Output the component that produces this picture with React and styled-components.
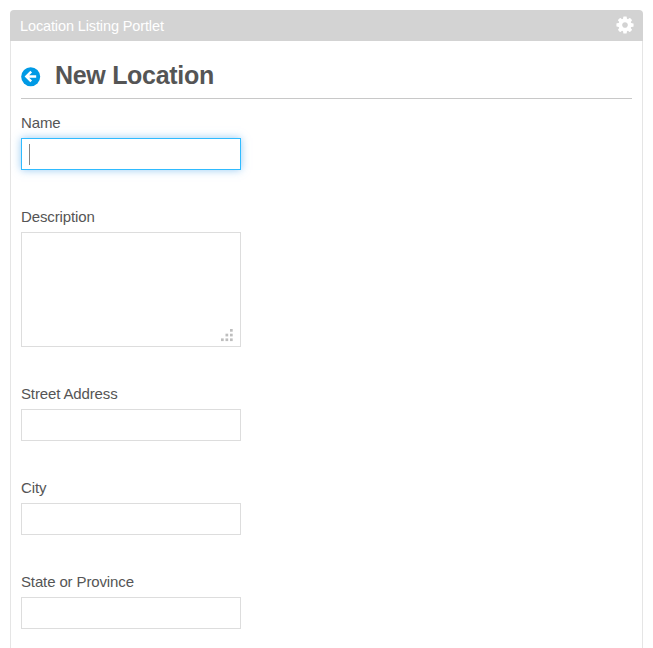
import React from "react";
import styled, { createGlobalStyle, css } from "styled-components";

const GlobalStyle = createGlobalStyle`
  *, *::before, *::after { box-sizing: border-box; }
  html, body { margin: 0; background: #fff; }
  body {
    height: 648px;
    overflow: hidden;
    color: #555;
    font: 15px/20px "Liberation Sans", Arial, sans-serif;
  }
`;

const Portlet = styled.section`
  margin: 10px 10px 0;
  height: 660px;
`;

const Topper = styled.header`
  display: flex;
  align-items: center;
  justify-content: space-between;
  height: 31px;
  padding: 0 8px 0 10px;
  border-radius: 4px 4px 0 0;
  background: #d3d3d3;
  color: #fff;
`;

const TopperTitle = styled.span`
  font-size: 14.5px;
  line-height: 20px;
  letter-spacing: -0.12px;
  padding-top: 1px;
`;

const GearIcon = styled.svg`
  display: block;
  flex: none;
  width: 20px;
  height: 20px;
  margin-bottom: 1px;
  fill: currentColor;
`;

const BackIcon = styled.svg`
  display: block;
  width: 20px;
  height: 20px;
`;

const Content = styled.div`
  height: 629px;
  padding: 10px 10px 0;
  border: 1px solid #e5e5e5;
  border-top: 0;
`;

const Heading = styled.div`
  display: flex;
  align-items: center;
  height: 48px;
  margin-bottom: 14px;
  border-bottom: 1px solid #c8c8c8;
`;

const BackLink = styled.a`
  margin: 5px 14px 0 0;
  color: #009ae5;
`;

const Title = styled.h1`
  margin: 1px 0 0;
  font-size: 25px;
  line-height: 40px;
  font-weight: 700;
  letter-spacing: -0.3px;
`;

const Field = styled.div`
  display: flex;
  flex-direction: column;
  align-items: flex-start;
  margin-bottom: 37px;
`;

const Label = styled.label`
  height: 20px;
  margin-bottom: 5px;
  letter-spacing: -0.13px;
`;

const control = css`
  width: 220px;
  border: 1px solid #ddd;
  background: #fff;
`;

const Input = styled.div`
  ${control}
  display: flex;
  align-items: center;
  height: 32px;
  padding: 0 7px;
  ${(p) =>
    p.$focused &&
    css`
      border-color: #2fbbff;
      box-shadow: 0 0 8px rgba(82, 168, 236, 0.6);
    `}
`;

const Caret = styled.span`
  width: 1px;
  height: 21px;
  background: #858585;
`;

const TextArea = styled.div`
  ${control}
  display: flex;
  align-items: flex-end;
  justify-content: flex-end;
  height: 115px;
  padding: 0 6px 4px 0;
`;

const GripSvg = styled.svg`
  display: block;
  width: 13px;
  height: 13px;
  fill: #bebebe;
`;

const COG =
  "M1152 896q0-106-75-181t-181-75-181 75-75 181 75 181 181 75 181-75 75-181zm512-109v222q0 12-8 23t-20 13l-185 28q-19 54-39 91 35 50 107 138 10 12 10 25t-9 23q-27 37-99 108t-94 71q-12 0-26-9l-138-108q-44 23-91 38-16 136-29 186-7 28-36 28h-222q-14 0-24.5-8.5t-11.5-21.5l-28-184q-49-16-90-37l-141 107q-10 9-25 9-14 0-25-11-126-114-165-168-7-10-7-23 0-12 8-23 15-21 51-66.5t54-70.5q-27-50-41-99l-183-27q-13-2-21-12.5t-8-23.5v-222q0-12 8-23t19-13l186-28q14-46 39-92-40-57-107-138-10-12-10-24 0-10 9-23 26-36 98.5-107.5t94.5-71.5q13 0 26 10l138 107q44-23 91-38 16-136 29-186 7-28 36-28h222q14 0 24.5 8.5t11.5 21.5l28 184q49 16 90 37l142-107q9-9 24-9 13 0 25 10 129 119 165 170 7 8 7 22 0 12-8 23-15 21-51 66.5t-54 70.5q26 50 41 98l183 28q13 2 21 12.5t8 23.5z";

const GRIP_DOTS = [
  [9, 0],
  [4.5, 4.7],
  [9, 4.7],
  [0, 9.4],
  [4.5, 9.4],
  [9, 9.4],
];

const Grip = () => (
  <GripSvg viewBox="0 0 13 13" aria-hidden="true">
    {GRIP_DOTS.map(([x, y]) => (
      <rect key={`${x}-${y}`} x={x} y={y} width="2.7" height="2.7" />
    ))}
  </GripSvg>
);

const FIELDS = [
  { label: "Name", focused: true },
  { label: "Description", multiline: true },
  { label: "Street Address" },
  { label: "City" },
  { label: "State or Province" },
];

export default function App() {
  return (
    <>
      <GlobalStyle />
      <Portlet>
        <Topper>
          <TopperTitle>Location Listing Portlet</TopperTitle>
          <GearIcon viewBox="0 0 1792 1792" aria-label="Options">
            <path d={COG} />
          </GearIcon>
        </Topper>
        <Content>
          <Heading>
            <BackLink aria-label="Back">
              <BackIcon viewBox="0 0 20 20">
                <circle cx="9.7" cy="9.7" r="9.5" fill="currentColor" />
                <path
                  d="M15.2 9.5H6M10.2 4.6L5.3 9.5L10.2 14.4"
                  fill="none"
                  stroke="#fff"
                  strokeWidth="2.4"
                />
              </BackIcon>
            </BackLink>
            <Title>New Location</Title>
          </Heading>
          {FIELDS.map(({ label, focused, multiline }) => (
            <Field key={label}>
              <Label>{label}</Label>
              {multiline ? (
                <TextArea role="textbox" aria-label={label}>
                  <Grip />
                </TextArea>
              ) : (
                <Input role="textbox" aria-label={label} $focused={focused}>
                  {focused && <Caret />}
                </Input>
              )}
            </Field>
          ))}
        </Content>
      </Portlet>
    </>
  );
}
